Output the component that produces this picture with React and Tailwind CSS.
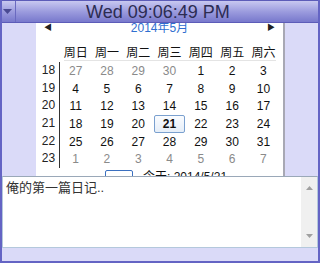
const weeks = [
  { n: 18, days: [[27, 0], [28, 0], [29, 0], [30, 0], [1, 1], [2, 1], [3, 1]] },
  { n: 19, days: [[4, 1], [5, 1], [6, 1], [7, 1], [8, 1], [9, 1], [10, 1]] },
  { n: 20, days: [[11, 1], [12, 1], [13, 1], [14, 1], [15, 1], [16, 1], [17, 1]] },
  { n: 21, days: [[18, 1], [19, 1], [20, 1], [21, 2], [22, 1], [23, 1], [24, 1]] },
  { n: 22, days: [[25, 1], [26, 1], [27, 1], [28, 1], [29, 1], [30, 1], [31, 1]] },
  { n: 23, days: [[1, 0], [2, 0], [3, 0], [4, 0], [5, 0], [6, 0], [7, 0]] },
];

const weekdays = ["周日", "周一", "周二", "周三", "周四", "周五", "周六"];

function Calendar() {
  return (
    <div className="w-[249px] h-full bg-white border-r-2 border-[#a8a8b4] overflow-hidden text-[12px] font-['Liberation_Sans','Noto_Sans_CJK_SC',sans-serif]">
      <div className="-mt-[3px] h-[16px] flex items-center justify-between px-[8px]">
        <span className="text-[8px] text-[#222] leading-none">◀</span>
        <span className="text-[#2f6fd0] leading-none">2014年5月</span>
        <span className="text-[8px] text-[#222] leading-none">▶</span>
      </div>
      <div className="mt-[6px] flex h-[18px]">
        <div className="w-[24px]" />
        <div className="flex">
          {weekdays.map((w) => (
            <div key={w} className="w-[31.3px] text-center leading-[18px] pt-[2px] text-[#111]">{w}</div>
          ))}
        </div>
      </div>
      <div className="ml-[28px] w-[212px] border-b border-[#e4e4e4]" />
      <div className="mt-[1px] flex">
        <div className="w-[24px] py-[4px] border-r border-[#333]">
          {weeks.map((wk) => (
            <div key={wk.n} className="h-[17.7px] first:-mt-[4px] last:-mb-[4px] text-center leading-[17.7px] text-[#222] pl-[2px]">{wk.n}</div>
          ))}
        </div>
        <div>
          {weeks.map((wk) => (
            <div key={wk.n} className="flex h-[17.7px]">
              {wk.days.map(([d, t], i) => (
                <div
                  key={i}
                  className={
                    t === 2
                      ? "w-[31.3px] h-[17.7px] flex items-center justify-center font-bold text-[#111] border border-[#7aa0cf] rounded-[2px] bg-gradient-to-b from-[#fafcff] to-[#e6eef8]"
                      : t === 1
                      ? "w-[31.3px] flex items-center justify-center text-[#111]"
                      : "w-[31.3px] flex items-center justify-center text-[#8a8a8a]"
                  }
                >
                  {d}
                </div>
              ))}
            </div>
          ))}
        </div>
      </div>
      <div className="mt-[2px] flex items-start h-[20px]">
        <div className="ml-[69px] w-[28px] h-[14px] border border-[#3b70c0] rounded-[2px]" />
        <span className="ml-[10px] text-[#111] leading-[14px]">今天: 2014/5/21</span>
      </div>
    </div>
  );
}

export default function App() {
  return (
    <div className="w-[320px] h-[263px] flex flex-col bg-[#dadaf8] border-l-2 border-r-2 border-b-2 border-[#6464c4] overflow-hidden">
      <div className="relative z-10 h-[23px] -mx-[2px] flex shrink-0 bg-gradient-to-b from-[#c8c8f0] via-[#9c9cde] to-[#7878cc] border-t border-b border-[#5c5cb8]">
        <div className="w-[16px] flex items-center justify-center border-r border-[#6a6ac0]">
          <svg width="9" height="5" viewBox="0 0 9 5"><path d="M0 0h9L4.5 5z" fill="#4a4a92" /></svg>
        </div>
        <div className="flex-1 flex items-center justify-center text-[18px] leading-none text-[#2c2c52] font-['Liberation_Sans',sans-serif] pr-[20px]">
          Wed 09:06:49 PM
        </div>
      </div>
      <div className="h-[153px] flex shrink-0">
        <div className="w-[34px]" />
        <Calendar />
      </div>
      <div className="h-[72px] flex border border-[#b4c8dc] border-t-[#9aa8b8] bg-white shrink-0">
        <div className="flex-1 px-[3px] pt-[2px] text-[13px] leading-[17px] text-[#333] font-['Liberation_Sans','Noto_Sans_CJK_SC',sans-serif]">
          俺的第一篇日记..
        </div>
        <div className="w-[16px] bg-[#f0f0f0] flex flex-col items-center justify-between py-[9px]">
          <svg width="7" height="4" viewBox="0 0 7 4"><path d="M0 4h7L3.5 0z" fill="#a0a0a0" /></svg>
          <svg width="7" height="4" viewBox="0 0 7 4"><path d="M0 0h7L3.5 4z" fill="#a0a0a0" /></svg>
        </div>
      </div>
      <div className="flex-1" />
    </div>
  );
}
